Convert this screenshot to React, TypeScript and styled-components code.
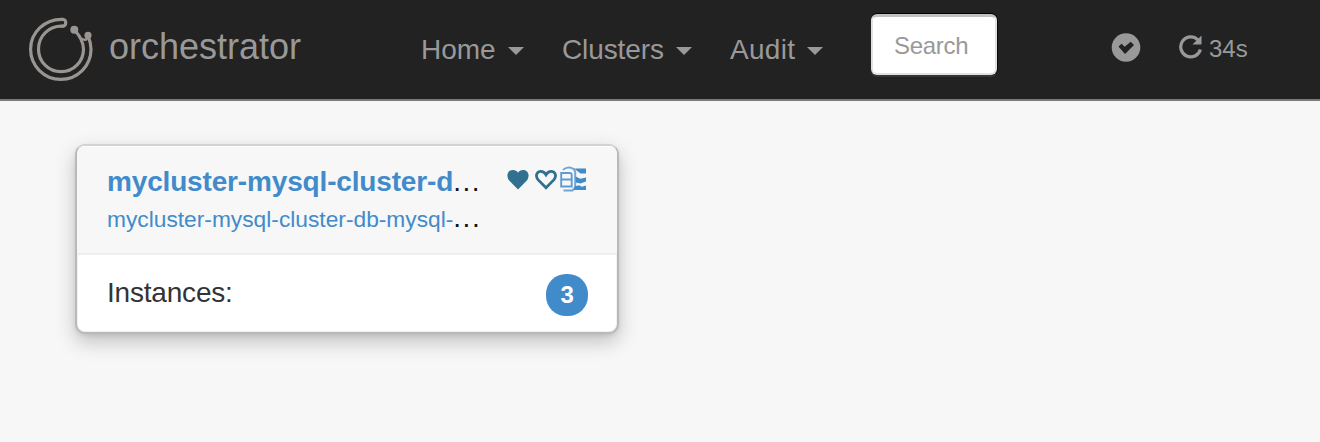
import React from 'react';
import styled, { createGlobalStyle } from 'styled-components';

const GlobalStyle = createGlobalStyle`
  * { box-sizing: border-box; }
  body {
    margin: 0;
    background: #f7f7f7;
    color: #333;
    font-family: "Liberation Sans", Arial, sans-serif;
    font-size: 28px;
  }
  a { color: inherit; text-decoration: none; }
`;

const Page = styled.div`
  min-height: 442px;
  background: #f7f7f7;
`;

const Navbar = styled.nav`
  display: flex;
  align-items: flex-start;
  height: 101px;
  padding: 0 0 0 28px;
  background: #222;
  border-bottom: 2px solid #7c7a7b;
  color: #999;
`;

const Brand = styled.a`
  display: flex;
  width: 393px;
  padding-top: 17px;
`;

const BrandName = styled.span`
  margin-left: 15px;
  font-size: 36px;
  line-height: 60px;
`;

const Menu = styled.div`
  display: flex;
  width: 450px;
`;

const MenuItem = styled.a<{ $width: number; $spacing?: number }>`
  display: flex;
  align-items: center;
  gap: 12px;
  width: ${p => p.$width}px;
  padding-top: 30px;
  line-height: 40px;
  letter-spacing: ${p => p.$spacing ?? 0}px;
  white-space: nowrap;
`;

const Caret = styled.span`
  margin-top: 1px;
  border: 8px solid transparent;
  border-top-color: #999;
  border-bottom: 0;
`;

const SearchInput = styled.input`
  width: 126px;
  height: 61px;
  margin-top: 14px;
  padding: 1px 20px 0 21px;
  border: 2px solid #e2e1e2;
  border-top: 3px solid #c3bfc2;
  border-radius: 6px;
  background: #fff;
  box-shadow: 0 -1px 0 #000, 1px 0 0 #090909, 0 2px 0 #353535;
  color: #333;
  font: 24px/56px "Liberation Sans", Arial, sans-serif;
  letter-spacing: -0.3px;
  &::placeholder { color: #999; opacity: 1; }
`;

const Status = styled.div`
  display: flex;
  margin-left: 114px;
`;

const Refresh = styled.a`
  display: flex;
  margin: 32px 0 0 38px;
  font-size: 24px;
  line-height: 34px;
`;

const RefreshTime = styled.span`
  margin-left: 6px;
`;

const CheckWrap = styled.span`
  padding-top: 32px;
`;

const Main = styled.main`
  padding: 43px 75px;
`;

const Card = styled.section`
  width: 544px;
  height: 190px;
  overflow: hidden;
  border: 2px solid #b9b9b9;
  border-top-color: #d2d2d2;
  border-radius: 10px;
  background: #fff;
  box-shadow: 0 8px 20px rgba(0, 0, 0, 0.22), 0 2px 4px rgba(0, 0, 0, 0.08), inset 0 0 0 1px #f1f1f1;
`;

const CardHeader = styled.header`
  display: flex;
  height: 109px;
  padding: 0 29px 0 30px;
  border-bottom: 2px solid #eee;
  background: #f7f7f7;
  box-shadow: inset 0 1px 0 #fff;
`;

const Names = styled.div`
  width: 400px;
  padding-top: 16px;
  white-space: nowrap;
`;

const Name = styled.div<{ $small?: boolean }>`
  font-size: ${p => (p.$small ? 22.75 : 28)}px;
  font-weight: ${p => (p.$small ? 400 : 700)};
  line-height: ${p => (p.$small ? 34 : 40)}px;
  letter-spacing: ${p => (p.$small ? 0 : -0.16)}px;
  color: #428bca;
`;

const Dots = styled.span`
  color: #111;
  font-size: 28px;
  font-weight: 400;
  line-height: 0;
  letter-spacing: 1.5px;
`;

const Icons = styled.div`
  display: flex;
  padding-top: 20px;
`;

const HeartSvg = styled.svg<{ $gap: number }>`
  margin: 3px ${p => p.$gap}px 0 0;
`;

const CardBody = styled.div`
  display: flex;
  justify-content: space-between;
  height: 77px;
  padding: 18px 29px 0 30px;
  line-height: 40px;
  letter-spacing: -0.2px;
`;

const Badge = styled.span`
  width: 42px;
  height: 42px;
  margin-top: 1px;
  border-radius: 20px;
  background: #428bca;
  color: #fff;
  font-size: 24px;
  font-weight: 700;
  line-height: 41px;
  text-align: center;
`;

const Logo = () => (
  <svg width="66" height="66" viewBox="0 0 66 66" fill="none" stroke="#9a9590" strokeWidth="3.2" strokeLinecap="round">
    <path d="M34.5 2.3C17 1.8 2.6 15 2.6 32.2A30.2 30.2 0 0 0 63 32.2C63 27 61.8 23 60 19" />
    <path d="M34.5 9.2C21.5 8.5 10.5 18.5 10.5 32.2A22.5 22.5 0 0 0 55.5 32.2C55.5 26 53.2 20.5 47 13.5" />
    <path d="M34.5 2.3C38.8 2 38.8 9.4 34.5 9.2" />
    <path d="M60 19C59 23 57.5 23.5 54.5 22" strokeWidth="2.5" />
    <circle cx="46.3" cy="12.8" r="2.4" fill="#9a9590" />
    <circle cx="60" cy="18.3" r="2" fill="#9a9590" />
  </svg>
);

const CheckIcon = () => (
  <svg width="30" height="30" viewBox="0 0 30 30">
    <circle cx="15" cy="15.5" r="14.3" fill="#999" />
    <path d="M7.5 14.5l3-2.7 3.2 3 6-5 3.3 3.2-9 9z" fill="#222" />
  </svg>
);

const RefreshIcon = () => (
  <svg width="24" height="32" viewBox="0 0 24 32">
    <path d="M18.8 7.8A10 10 0 1 0 21.4 17.5" fill="none" stroke="#999" strokeWidth="3.2" />
    <path d="M22.5 3.5v9h-9z" fill="#999" />
  </svg>
);

const Heart = ({ outline = false, gap }: { outline?: boolean; gap: number }) => (
  <HeartSvg $gap={gap} width="22" height="22" viewBox="0 0 22 22">
    <path
      d={outline
        ? 'M11 18.8L3 10.7C-.1 6.6 2 2.3 5.8 2.3c2.4 0 4.2 1.6 5.2 3.4 1-1.8 2.8-3.4 5.2-3.4C20 2.3 22.1 6.6 19 10.7z'
        : 'M11 20.5L1.7 11C-1.2 6.2 1 1 5.8 1c2.4 0 4.2 1 5.2 2.7C12 2 13.8 1 16.2 1 21 1 23.2 6.2 20.3 11z'}
      fill={outline ? 'none' : '#31708f'}
      stroke={outline ? '#31708f' : 'none'}
      strokeWidth="2.8"
    />
  </HeartSvg>
);

const DatabaseIcon = () => (
  <svg width="27" height="27" viewBox="0 0 27 27">
    <path d="M1.2 7h8.5c1.3 0 2 .8 2 2v11.5H1.2zM1.2 13.5h10.5" fill="none" stroke="#5f9ad2" strokeWidth="1.9" />
    <path d="M3 4C5 1.5 10 .5 13.5 3l1.7 2.5v16L12.5 24.5H3.5" fill="none" stroke="#70a5d7" strokeWidth="2" />
    <path d="M14 2.5h12v5h-5.5zM15.5 10.5l5 2.3 5.5-1.3v4l-5.5 2-4.5-1zM14.5 20.5l4.5-1.2 3 1.4 4-1.2V24H14z" fill="#428bca" />
  </svg>
);

export default function App() {
  return (
    <Page>
      <GlobalStyle />
      <Navbar>
        <Brand href="#"><Logo /><BrandName>orchestrator</BrandName></Brand>
        <Menu>
          <MenuItem href="#" $width={141}>Home<Caret /></MenuItem>
          <MenuItem href="#" $width={168} $spacing={-0.1}>Clusters<Caret /></MenuItem>
          <MenuItem href="#" $width={141} $spacing={0.3}>Audit<Caret /></MenuItem>
        </Menu>
        <SearchInput placeholder="Search" />
        <Status>
          <CheckWrap><CheckIcon /></CheckWrap>
          <Refresh href="#"><RefreshIcon /><RefreshTime>34s</RefreshTime></Refresh>
        </Status>
      </Navbar>
      <Main>
        <Card>
          <CardHeader>
            <Names>
              <Name><a href="#">mycluster-mysql-cluster-d</a><Dots>...</Dots></Name>
              <Name $small><a href="#">mycluster-mysql-cluster-db-mysql-</a><Dots>...</Dots></Name>
            </Names>
            <Icons><Heart gap={6} /><Heart outline gap={3} /><DatabaseIcon /></Icons>
          </CardHeader>
          <CardBody><span>Instances:</span><Badge>3</Badge></CardBody>
        </Card>
      </Main>
    </Page>
  );
}
